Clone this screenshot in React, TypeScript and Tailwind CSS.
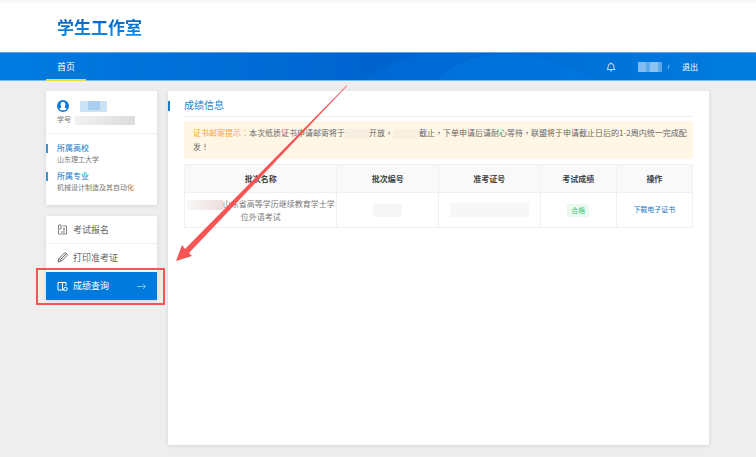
import React from "react";
import clsx from "clsx";

const menuItems = [
  { label: "考试报名", icon: "form", active: false },
  { label: "打印准考证", icon: "pen", active: false },
  { label: "成绩查询", icon: "query", active: true },
];

const profile = [
  { label: "所属高校", value: "山东理工大学" },
  { label: "所属专业", value: "机械设计制造及其自动化" },
];

const MenuIcon = ({ name }: { name: string }) => {
  if (name === "form") {
    return (
      <svg className="h-[11px] w-[11px]" viewBox="0 0 22 22" fill="none" stroke="currentColor" strokeWidth="1.6">
        <path d="M11 4H19V20H3V11" />
        <path d="M3 2H8V10H3Z" />
        <path d="M12 9H16M12 12H16M8 16H16" />
      </svg>
    );
  }
  if (name === "pen") {
    return (
      <svg className="h-[11px] w-[11px]" viewBox="0 0 22 22" fill="none" stroke="currentColor" strokeWidth="2">
        <path d="M2 20L4 13L15 2Q17 1 19 3Q21 5 20 7L9 18Z" />
        <path d="M4 13L9 18M7 15L18 4" />
      </svg>
    );
  }
  return (
    <svg className="h-[11px] w-[11px]" viewBox="0 0 22 22" fill="none" stroke="currentColor" strokeWidth="2">
      <path d="M11 18H2V3H18V10M11 3V18" />
      <circle cx="17" cy="16" r="3.500" />
      <path d="M11 18H14" />
    </svg>
  );
};

const Avatar = () => (
  <svg className="h-3 w-3" viewBox="0 0 24 24">
    <circle cx="12" cy="12" r="12" fill="#0a7ad8" />
    <path
      d="M12 3.500C8.500 3.500 7 6.500 7.300 9.500C7.500 12 8.500 13 8.500 14.500C8 16 5 16 4.500 18C7 21.500 17 21.500 19.500 18C19 16 16 16 15.500 14.500C15.500 13 16.500 12 16.700 9.500C17 6.500 15.500 3.500 12 3.500Z"
      fill="#fff"
    />
  </svg>
);

// Decorative waves behind the navigation
const NavWaves = () => (
  <svg className="absolute inset-0 h-full w-full" viewBox="0 0 756 28" preserveAspectRatio="none">
    <path d="M364 28Q395 2 440 0H482Q450 10 438 28Z" fill="#0070da" opacity="0.4" />
    <path d="M438 28Q455 5 500 1Q545 0 595 28Z" fill="#0078e0" opacity="0.6" />
  </svg>
);

const Nav = () => (
  <nav className="relative flex h-[29px] border-y border-t-[#5ea4e4] border-b-[#6cbdf8] bg-linear-to-r from-[#007ce0] via-[#0063cf] to-[#007de0] pr-[58px] pl-[46px] text-white">
    <NavWaves />
    <a href="#" className="relative -mb-px flex items-center border-b-2 border-[#f0d934] px-[11px] pt-px text-[9px]">
      首页
    </a>
    <div className="relative ml-auto flex items-center text-[8px]">
      <button type="button" aria-label="通知" className="mr-[22px]">
        <svg className="h-[10px] w-[10px]" viewBox="0 0 20 20" fill="none" stroke="currentColor" strokeWidth="1.5">
          <path d="M2 15Q4.500 13 4.500 8Q4.500 3 10 3Q15.500 3 15.500 8Q15.500 13 18 15ZM10 1V3M8 17Q10 19.500 12 17" />
        </svg>
      </button>
      <span className="flex h-[10px] w-6 bg-[#5faae8]">
        <span className="h-full w-2 bg-[#82bcf0]" />
        <span className="ml-1 h-full w-2 bg-[#8bc4f2]" />
      </span>
      <span className="mx-[6px] h-1 w-px rotate-12 bg-[#75b8ef]" />
      <a href="#" className="ml-[7px]">退出</a>
    </div>
  </nav>
);

const ProfileCard = () => (
  <section className="bg-white pb-[11px] shadow-[0_1px_4px_rgba(0,0,0,0.1)]">
    <div className="border-b border-[#f1f1f1] px-[11px] pt-[9px] pb-[7px]">
      <div className="flex h-3 items-center">
        <Avatar />
        <span className="ml-[11px] flex h-[11px] w-[27px] bg-[#cbe2f5]">
          <span className="ml-2 h-[9px] w-3 bg-[#a8cff0]" />
        </span>
      </div>
      <div className="mt-[3px] flex h-[11px] items-center text-[7px] text-[#777]">
        学号
        <span className="ml-1 h-[9px] flex-1 bg-linear-to-r from-[#f2f2f2] to-[#dcdcdc]" />
        <span className="w-[11px]" />
      </div>
    </div>
    <dl className="pt-2">
      {profile.map((row) => (
        <div key={row.label} className="mb-1 pb-px last:mb-0">
          <dt className="flex h-3 items-center text-[8px] text-[#0f74c8]">
            <span className="mr-[9px] h-[9px] w-[2px] bg-[#3b94cf]" />
            {row.label}
          </dt>
          <dd className="h-[11px] pl-[11px] text-[7px] leading-[11px] whitespace-nowrap text-[#777]">{row.value}</dd>
        </div>
      ))}
    </dl>
  </section>
);

const SideMenu = () => (
  <ul className="bg-white text-[9px] shadow-[0_1px_4px_rgba(0,0,0,0.1)]">
    {menuItems.map((item) => (
      <li key={item.label} className={clsx("relative", !item.active && "border-b border-[#f1f1f1]")}>
        <a
          href="#"
          className={clsx(
            "flex items-center px-[11px]",
            item.active ? "h-7 bg-[#007bdc] text-white" : "h-[27px] text-[#666]"
          )}
        >
          <MenuIcon name={item.icon} />
          <span className="ml-[5px]">{item.label}</span>
          {item.active && (
            <svg className="ml-auto h-[7px] w-[9px]" viewBox="0 0 18 14" fill="none" stroke="#9bd0f8" strokeWidth="1.6">
              <path d="M0 7H17M12 2L17 7L12 12" />
            </svg>
          )}
        </a>
        {item.active && (
          <span className="pointer-events-none absolute -top-1 -right-2 -bottom-[5px] -left-[10px] border-2 border-[#f95454]" />
        )}
      </li>
    ))}
  </ul>
);

const Notice = () => (
  <p className="mt-1 rounded bg-[#fff6e6] py-[5px] pr-1 pl-[9px] font-['Noto_Sans_CJK_TC',sans-serif] text-[8px] leading-[14px] text-[#666]">
    <span className="text-[#f5a52c]">证书邮寄提示：</span>
    本次纸质证书申请邮寄将于
    <span className="inline-block h-[10px] w-6 bg-[#f6eee0] align-middle" />
    开放，
    <span className="inline-block h-[10px] w-[26px] bg-[#f9f0e2] align-middle" />
    截止，下单申请后请耐心等待，联盟将于申请截止日后的1-2周内统一完成配发！
  </p>
);

const ScoreTable = () => (
  <table className="mt-[5px] w-full table-fixed border-collapse text-center text-[8px] text-[#777]">
    <thead className="bg-[#f9f9f9] text-[#444]">
      <tr className="h-7">
        <th className="w-[30%] border border-[#f0f0f0] font-bold">批次名称</th>
        <th className="w-[20%] border border-[#f0f0f0] font-bold">批次编号</th>
        <th className="w-[20%] border border-[#f0f0f0] font-bold">准考证号</th>
        <th className="w-[15%] border border-[#f0f0f0] font-bold">考试成绩</th>
        <th className="w-[15%] border border-[#f0f0f0] font-bold">操作</th>
      </tr>
    </thead>
    <tbody>
      <tr className="h-[35px]">
        <td className="border border-[#f0f0f0] leading-[13px]">
          <span className="inline-block h-[10px] w-9 bg-linear-to-r from-[#f8f8f8] to-[#eedddd] align-middle" />
          山东省高等学历继续教育学士学位外语考试
        </td>
        <td className="border border-[#f0f0f0]">
          <span className="mx-auto block h-[13px] w-[29px] bg-[#f6f6f6]" />
        </td>
        <td className="border border-[#f0f0f0]">
          <span className="mx-auto block h-[14px] w-[79px] bg-[#f7f7f7]" />
        </td>
        <td className="border border-[#f0f0f0]">
          <span className="mx-auto block h-[13px] w-[22px] bg-[#e9f9ef] text-[7px] leading-[13px] text-[#4cc681]">合格</span>
        </td>
        <td className="border border-[#f0f0f0] text-[7px]">
          <a href="#" className="text-[#1478cc]">下载电子证书</a>
        </td>
      </tr>
    </tbody>
  </table>
);

const App = () => {
  return (
    <div className="flex min-h-screen flex-col bg-[#eee] font-['Open_Sans','Noto_Sans_CJK_SC',sans-serif]">
      <header className="border-t-[3px] border-[#f7f7f7] bg-white">
        <div className="flex h-[49px] items-center px-[57px]">
          <h1 className="bg-linear-to-b from-[#0759b8] to-[#0796f5] bg-clip-text text-[17px] font-bold text-transparent">
            学生工作室
          </h1>
        </div>
        <Nav />
      </header>

      <div className="relative flex flex-1 gap-[11px] pt-[10px] pr-[47px] pb-3 pl-[46px]">
        <aside className="flex w-[111px] shrink-0 flex-col gap-[11px]">
          <ProfileCard />
          <SideMenu />
        </aside>

        <main className="min-w-0 flex-1 bg-white pt-[3px] pr-4 shadow-[0_1px_4px_rgba(0,0,0,0.1)]">
          <div className="flex items-center">
            <span className="h-[10px] w-[2px] bg-[#1a7fc4]" />
            <h2 className="ml-[14px] h-[23px] flex-1 border-b border-[#f0f0f0] text-[10px] leading-[22px] text-[#1b84d6]">
              成绩信息
            </h2>
          </div>
          <div className="pl-4">
            <Notice />
            <ScoreTable />
          </div>
        </main>

        {/* Arrow pointing at the active menu item */}
        <svg className="pointer-events-none absolute top-1 left-[176px] h-[177px] w-[172px]" viewBox="0 0 172 177">
          <path d="M170.500 0.500L171 1L13 168L16 171L0 176L6 160L9 164Z" fill="#f95454" />
        </svg>
      </div>
    </div>
  );
};

export default App;
